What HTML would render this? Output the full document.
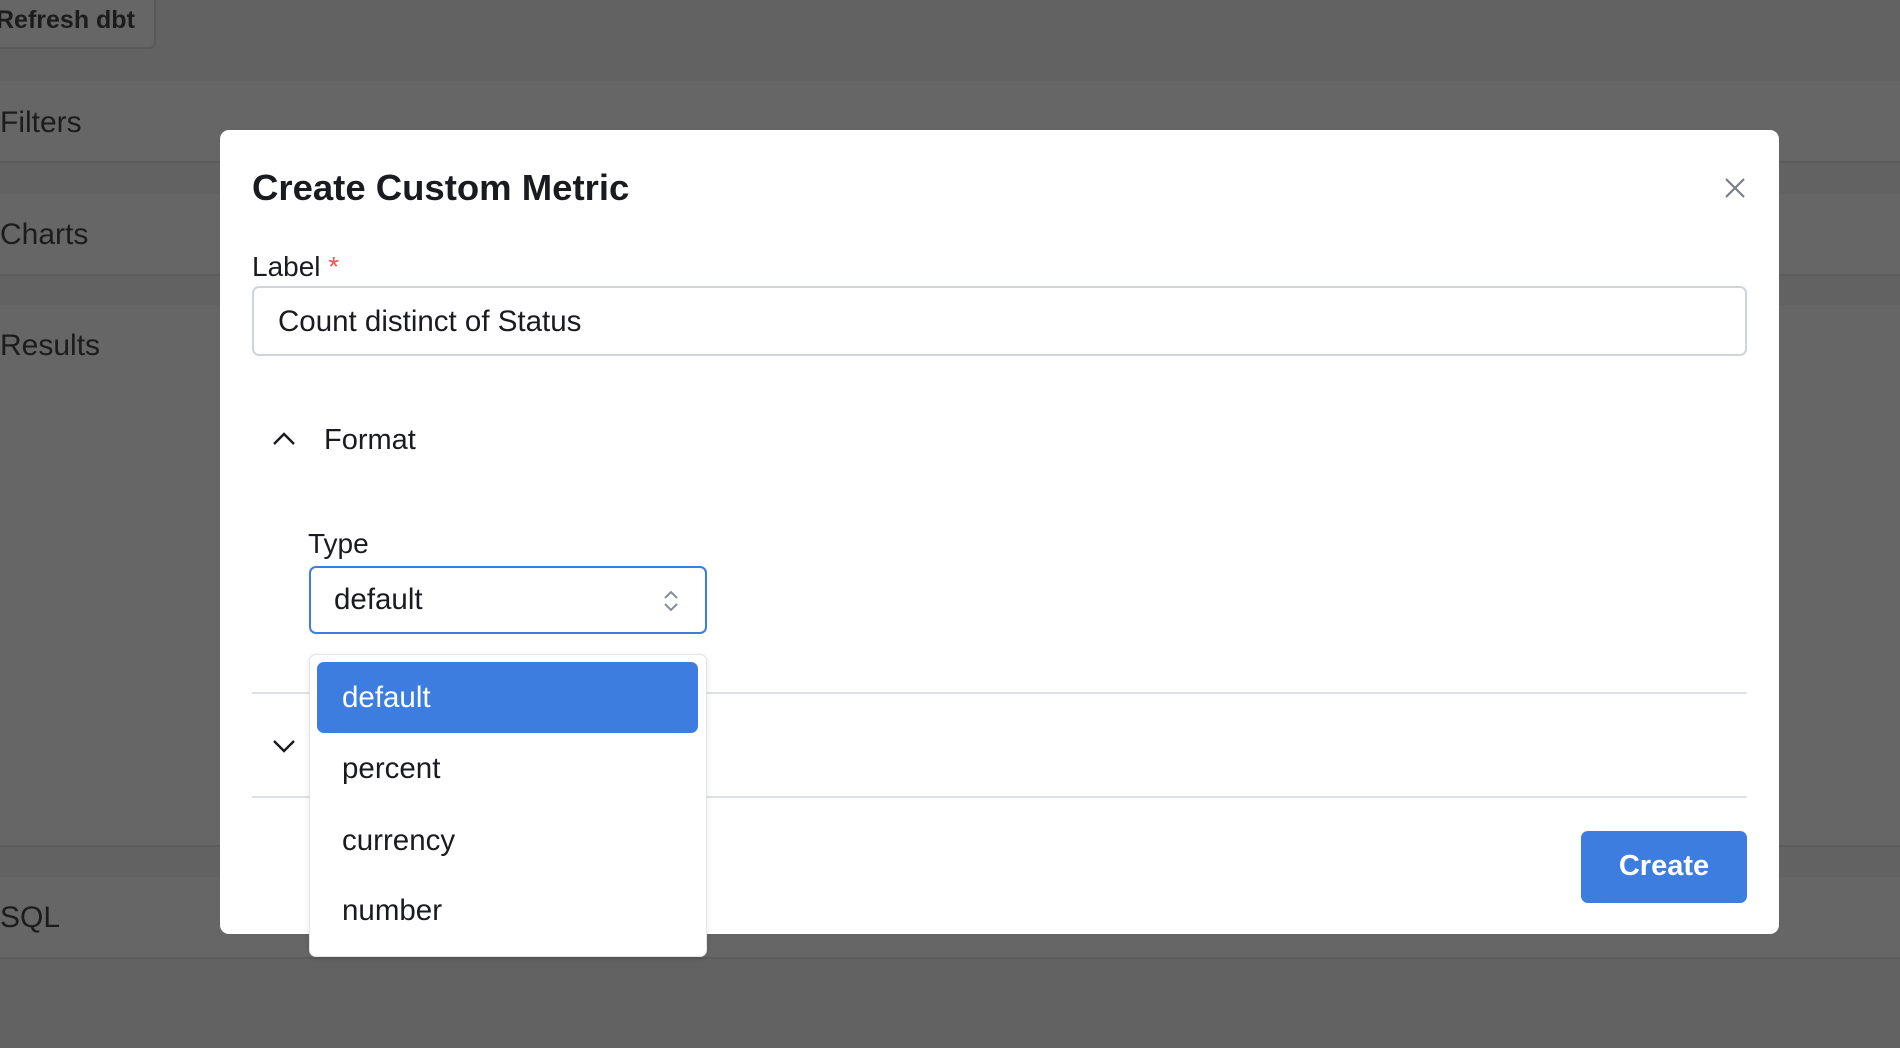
<!DOCTYPE html>
<html><head><meta charset="utf-8"><style>
*{box-sizing:border-box;margin:0;padding:0}
body{width:1900px;height:1048px;overflow:hidden;background:#626262;font-family:"Liberation Sans",sans-serif;position:relative;color:#1a1b1e}
.abs{position:absolute}
.panel{position:absolute;left:0;width:1900px;background:#666;border-bottom:2px solid #5c5c5c}
.ptxt{position:absolute;left:0;font-size:30px;color:#1c1c1c;line-height:1}
.modal{position:absolute;left:220px;top:130px;width:1559px;height:804px;background:#fff;border-radius:9px}
.t{position:absolute;line-height:1;white-space:nowrap}
</style></head><body>
<div class="abs" style="left:-10px;top:-10px;width:166px;height:59px;background:#666;border:2px solid #595959;border-radius:7px"></div>
<div class="t" style="left:-4px;top:8px;font-size:25px;font-weight:bold;color:#1c1c1c">Refresh dbt</div>
<div class="panel" style="top:81px;height:82px"></div>
<div class="ptxt" style="top:108px">Filters</div>
<div class="panel" style="top:194px;height:82px"></div>
<div class="ptxt" style="top:220px">Charts</div>
<div class="panel" style="top:305px;height:542px"></div>
<div class="ptxt" style="top:331px">Results</div>
<div class="panel" style="top:877px;height:82px"></div>
<div class="ptxt" style="top:903px">SQL</div>

<div class="modal"></div>
<div class="t" style="left:252px;top:170px;font-size:36.5px;font-weight:bold">Create Custom Metric</div>
<svg class="abs" style="left:1724px;top:177px" width="22" height="22" viewBox="0 0 22 22"><path d="M2 2L20 20M20 2L2 20" stroke="#7a8087" stroke-width="2.2" fill="none"/></svg>
<div class="t" style="left:252px;top:253px;font-size:28px;font-weight:500">Label <span style="color:#fa5252">*</span></div>
<div class="abs" style="left:252px;top:286px;width:1495px;height:70px;border:2px solid #ced4da;border-radius:7px"></div>
<div class="t" style="left:278px;top:307px;font-size:29.5px">Count distinct of Status</div>
<svg class="abs" style="left:272px;top:431px" width="24" height="16" viewBox="0 0 24 16"><path d="M2 13L12 3L22 13" stroke="#1a1b1e" stroke-width="2.4" fill="none"/></svg>
<div class="t" style="left:324px;top:426px;font-size:29px">Format</div>
<div class="t" style="left:308px;top:530px;font-size:28px">Type</div>
<div class="abs" style="left:309px;top:566px;width:398px;height:68px;border:2px solid #3b7de0;border-radius:7px"></div>
<div class="t" style="left:334px;top:585px;font-size:29.5px">default</div>
<svg class="abs" style="left:662px;top:588px" width="18" height="26" viewBox="0 0 18 26"><path d="M3 10L9 4L15 10M3 16L9 22L15 16" stroke="#868e96" stroke-width="2" fill="none"/></svg>
<div class="abs" style="left:252px;top:692px;width:1495px;height:2px;background:#dee2e6"></div>
<svg class="abs" style="left:272px;top:738px" width="24" height="16" viewBox="0 0 24 16"><path d="M2 3L12 13L22 3" stroke="#1a1b1e" stroke-width="2.4" fill="none"/></svg>
<div class="abs" style="left:252px;top:796px;width:1495px;height:2px;background:#dee2e6"></div>
<div class="abs" style="left:1581px;top:831px;width:166px;height:72px;background:#3d7de0;border-radius:7px"></div>
<div class="t" style="left:1581px;top:852px;width:166px;text-align:center;font-size:29px;font-weight:bold;color:#fff">Create</div>

<div class="abs" style="left:309px;top:654px;width:398px;height:303px;background:#fff;border:1px solid #e3e5e8;border-radius:7px;box-shadow:0 2px 6px rgba(0,0,0,.1)"></div>
<div class="abs" style="left:317px;top:662px;width:381px;height:71px;background:#3d7de0;border-radius:7px"></div>
<div class="t" style="left:342px;top:683px;font-size:29.5px;color:#fff">default</div>
<div class="t" style="left:342px;top:754px;font-size:29.5px">percent</div>
<div class="t" style="left:342px;top:826px;font-size:29.5px">currency</div>
<div class="t" style="left:342px;top:896px;font-size:29.5px">number</div>
</body></html>
